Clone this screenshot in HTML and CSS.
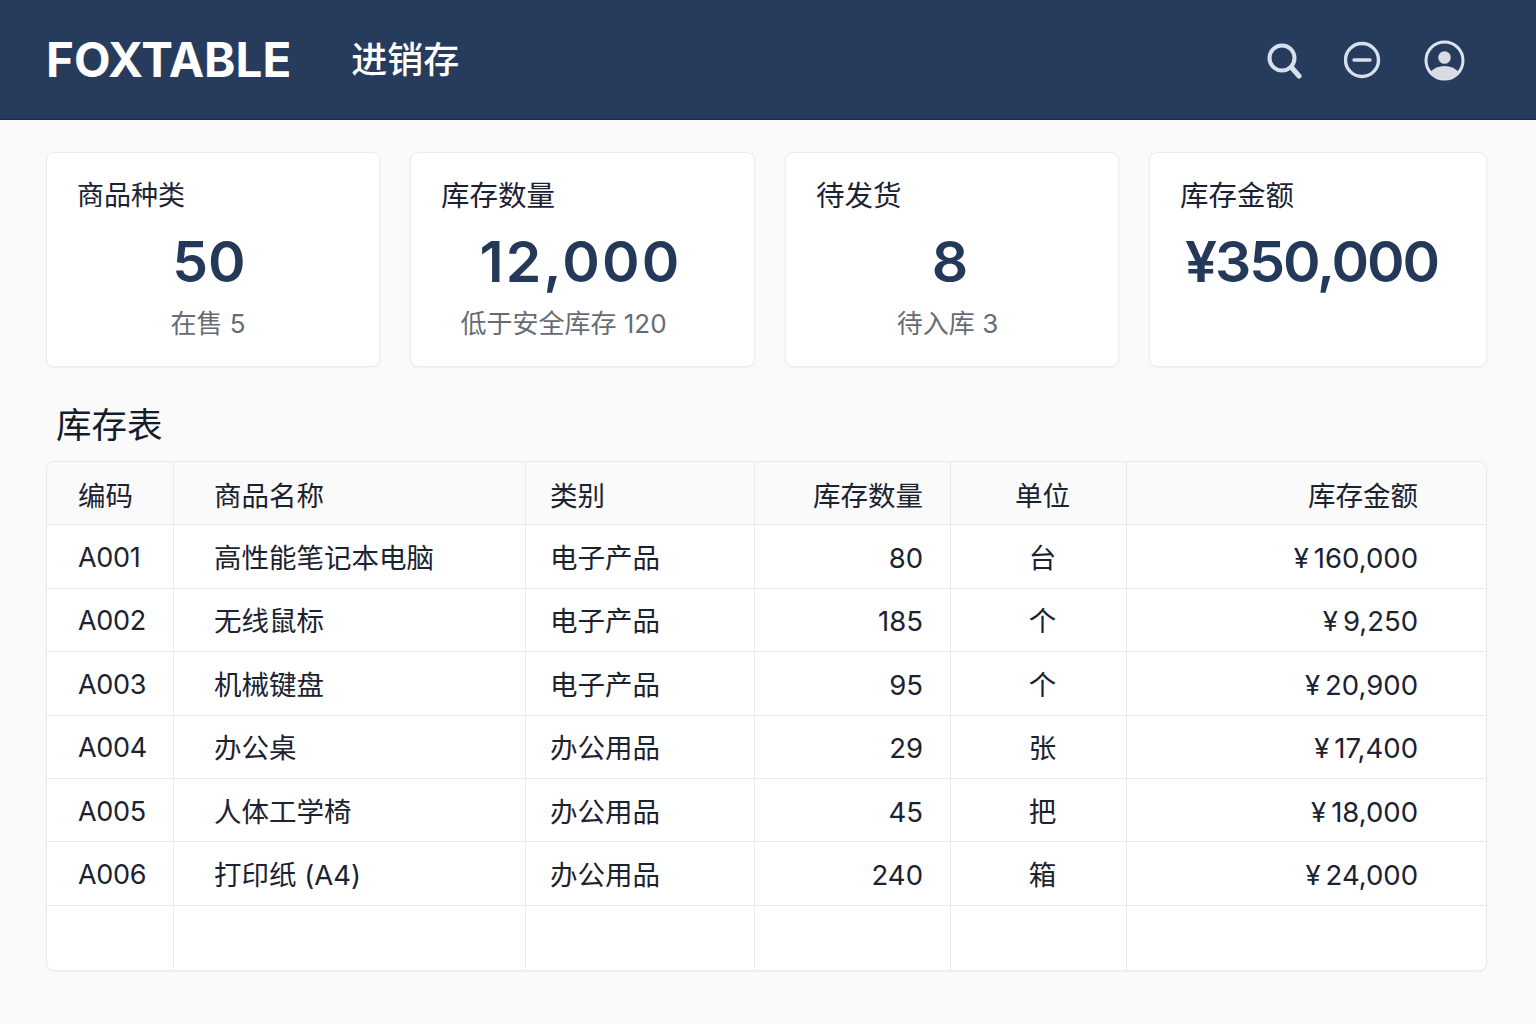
FILE: index.html
```html
<!DOCTYPE html>
<html lang="zh-CN">
<head>
<meta charset="utf-8">
<title>FOXTABLE 进销存</title>
<link rel="stylesheet" href="styles.css">
</head>
<body>
<header class="topbar">
  <div class="logo">FOXTABLE</div>
  <div class="module">进销存</div>
  <div class="actions">
    <svg class="icon icon-search" viewBox="0 0 38 42" aria-label="搜索"><circle cx="18" cy="19" r="12.500" fill="none" stroke="#d5e0ec" stroke-width="4"/><path d="M28 29 L35 37" stroke="#d5e0ec" stroke-width="5" stroke-linecap="round"/></svg>
    <svg class="icon icon-minus" viewBox="0 0 38 42" aria-label="收起"><circle cx="18" cy="21" r="16.500" fill="none" stroke="#d5e0ec" stroke-width="3.4"/><path d="M10 21 H26" stroke="#d5e0ec" stroke-width="3.4" stroke-linecap="round"/></svg>
    <svg class="icon icon-user" viewBox="0 0 42 42" aria-label="用户"><circle cx="20.500" cy="21.500" r="18.500" fill="none" stroke="#dbe3ed" stroke-width="3"/><circle cx="20.500" cy="18.500" r="6.300" fill="#d8dbe2"/><path d="M6 33 C10 29 15 27 20.500 27 C26 27 31 29 35 33 C31.500 37.500 26.500 40 20.500 40 C14.500 40 9.500 37.500 6 33 Z" fill="#d8dbe2"/></svg>
  </div>
</header>
<main class="content">
  <section class="cards">
    <article class="card card-a">
      <h2 class="card-label">商品种类</h2>
      <div class="card-value">50</div>
      <div class="card-sub">在售 5</div>
    </article>
    <article class="card card-b">
      <h2 class="card-label">库存数量</h2>
      <div class="card-value">12,000</div>
      <div class="card-sub">低于安全库存 120</div>
    </article>
    <article class="card card-c">
      <h2 class="card-label">待发货</h2>
      <div class="card-value">8</div>
      <div class="card-sub">待入库 3</div>
    </article>
    <article class="card card-d">
      <h2 class="card-label">库存金额</h2>
      <div class="card-value">¥350,000</div>
      <div class="card-sub">&nbsp;</div>
    </article>
  </section>
  <h1 class="section-title">库存表</h1>
  <div class="table-wrap">
    <table class="stock">
      <colgroup>
        <col class="c1"><col class="c2"><col class="c3"><col class="c4"><col class="c5"><col class="c6">
      </colgroup>
      <thead>
        <tr><th class="code">编码</th><th class="name">商品名称</th><th class="cat">类别</th><th class="qty">库存数量</th><th class="unit">单位</th><th class="amt">库存金额</th></tr>
      </thead>
      <tbody>
        <tr><td class="code">A001</td><td class="name">高性能笔记本电脑</td><td class="cat">电子产品</td><td class="qty">80</td><td class="unit">台</td><td class="amt"><span class="yen">¥</span>160,000</td></tr>
        <tr><td class="code">A002</td><td class="name">无线鼠标</td><td class="cat">电子产品</td><td class="qty">185</td><td class="unit">个</td><td class="amt"><span class="yen">¥</span>9,250</td></tr>
        <tr><td class="code">A003</td><td class="name">机械键盘</td><td class="cat">电子产品</td><td class="qty">95</td><td class="unit">个</td><td class="amt"><span class="yen">¥</span>20,900</td></tr>
        <tr><td class="code">A004</td><td class="name">办公桌</td><td class="cat">办公用品</td><td class="qty">29</td><td class="unit">张</td><td class="amt"><span class="yen">¥</span>17,400</td></tr>
        <tr><td class="code">A005</td><td class="name">人体工学椅</td><td class="cat">办公用品</td><td class="qty">45</td><td class="unit">把</td><td class="amt"><span class="yen">¥</span>18,000</td></tr>
        <tr><td class="code">A006</td><td class="name">打印纸 (A4)</td><td class="cat">办公用品</td><td class="qty">240</td><td class="unit">箱</td><td class="amt"><span class="yen">¥</span>24,000</td></tr>
        <tr class="blank"><td class="code"></td><td class="name"></td><td class="cat"></td><td class="qty"></td><td class="unit"></td><td class="amt"></td></tr>
      </tbody>
    </table>
  </div>
</main>
</body>
</html>
```

FILE: styles.css
```css
* { box-sizing: border-box; }
html, body { margin: 0; padding: 0; }
body {
  width: 1536px;
  height: 1024px;
  overflow: hidden;
  background: #fafafb;
  color: #1b2230;
  font-family: Inter, "Noto Sans CJK SC", sans-serif;
}
.topbar {
  height: 120px;
  display: flex;
  align-items: center;
  padding: 0 70px 0 46px;
  background: #273c5d;
  border-bottom: 1px solid #1a2a42;
  color: #fff;
}
.logo {
  font-size: 47.500px;
  font-weight: 700;
  line-height: 56px;
}
.module {
  margin-left: 60px;
  font-size: 36px;
  font-weight: 500;
  line-height: 50px;
}
.actions {
  margin-left: auto;
  display: flex;
  align-items: center;
  gap: 42px;
}
.icon { display: block; height: 42px; }
.icon-search, .icon-minus { width: 38px; }
.icon-user { width: 42px; }
.content { padding: 32px 49px 0 46px; }
.cards {
  display: grid;
  grid-template-columns: 334px 345px 334px 338px;
  column-gap: 30px;
}
.card {
  height: 215px;
  padding: 24px 30px 0;
  background: #fff;
  border: 1px solid #ebecef;
  border-radius: 8px;
  box-shadow: 0 1px 2px rgba(20, 30, 50, 0.04);
}
.card-label {
  margin: 0;
  font-size: 28.500px;
  font-weight: 400;
  line-height: 38px;
  color: #1a2233;
}
.card-a .card-label { font-size: 27px; }
.card-value {
  margin-top: 13px;
  font-size: 57px;
  font-weight: 600;
  line-height: 68px;
  color: #24395a;
  text-align: center;
  white-space: nowrap;
}
.card-sub {
  margin-top: 10px;
  font-size: 26px;
  line-height: 36px;
  color: #666c75;
  text-align: center;
}
.card-a .card-value { padding-right: 8px; }
.card-a .card-sub { padding-right: 10px; }
.card-b .card-value { padding-right: 4px; letter-spacing: 2.200px; }
.card-b .card-sub { padding-right: 38px; }
.card-c .card-value { padding-right: 4px; }
.card-c .card-sub { padding-right: 9px; }
.card-d .card-value { padding-right: 13px; letter-spacing: -2.100px; }
.section-title {
  margin: 34px 0 10px 10px;
  font-size: 35.500px;
  font-weight: 400;
  line-height: 50px;
  color: #151c2c;
}
.table-wrap {
  width: 1441px;
  background: #fff;
  border: 1px solid #e8e9ec;
  border-radius: 8px;
  overflow: hidden;
  box-shadow: 0 1px 2px rgba(20, 30, 50, 0.04);
}
.stock {
  width: 1439px;
  table-layout: fixed;
  border-collapse: separate;
  border-spacing: 0;
  font-size: 27.500px;
}
.c1 { width: 127px; }
.c2 { width: 352px; }
.c3 { width: 229px; }
.c4 { width: 196px; }
.c5 { width: 176px; }
.c6 { width: 359px; }
.stock th, .stock td {
  height: 63.400px;
  padding: 3px 0 0;
  border-right: 1px solid #e9eaed;
  border-bottom: 1px solid #e9eaed;
  font-weight: 400;
  line-height: 38px;
  color: #1b2230;
  white-space: nowrap;
}
.stock th { padding-top: 6px; background: #fafafa; }
.stock th:last-child, .stock td:last-child { border-right: 0; }
.stock .blank td { height: 64px; border-bottom: 0; }
.stock .code { padding-left: 31px; text-align: left; }
.stock td.code { font-size: 27px; letter-spacing: -0.300px; }
.stock .name { padding-left: 40px; text-align: left; }
.stock .cat { padding-left: 24px; text-align: left; }
.stock .qty { padding-right: 27px; text-align: right; }
.stock .unit { padding-left: 8px; text-align: center; }
.stock .amt { padding-right: 68px; text-align: right; }
.yen { margin-right: 5px; }
```
